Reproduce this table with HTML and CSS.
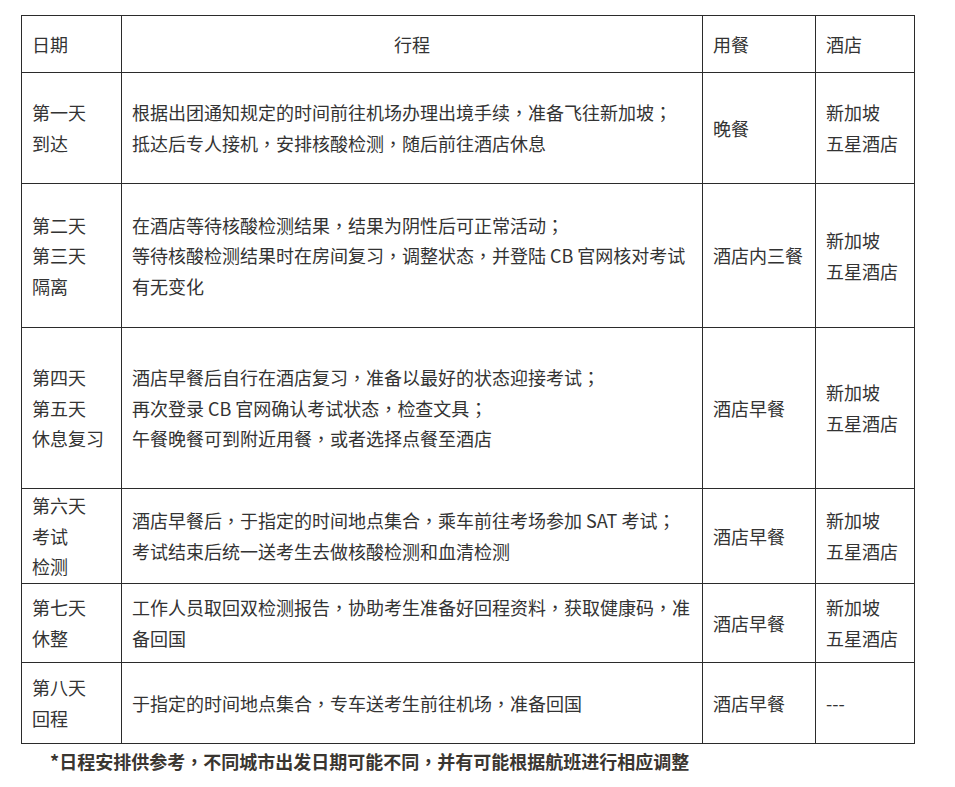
FILE: index.html
```html
<!DOCTYPE html>
<html lang="zh-CN">
<head>
<meta charset="utf-8">
<title>行程安排</title>
<link rel="stylesheet" href="styles.css">
</head>
<body>
<div class="page">
  <table class="schedule">
    <colgroup>
      <col class="c-date">
      <col class="c-plan">
      <col class="c-meal">
      <col class="c-hotel">
    </colgroup>
    <tr class="r-head">
      <td>日期</td>
      <td class="center">行程</td>
      <td>用餐</td>
      <td>酒店</td>
    </tr>
    <tr class="r1">
      <td>第一天<br>到达</td>
      <td>根据出团通知规定的时间前往机场办理出境手续<span class="pc" lang="zh-TW">，</span>准备飞往新加坡<span class="pc" lang="zh-TW">；</span><br>抵达后专人接机<span class="pc" lang="zh-TW">，</span>安排核酸检测<span class="pc" lang="zh-TW">，</span>随后前往酒店休息</td>
      <td>晚餐</td>
      <td>新加坡<br>五星酒店</td>
    </tr>
    <tr class="r2">
      <td>第二天<br>第三天<br>隔离</td>
      <td>在酒店等待核酸检测结果<span class="pc" lang="zh-TW">，</span>结果为阴性后可正常活动<span class="pc" lang="zh-TW">；</span><br>等待核酸检测结果时在房间复习<span class="pc" lang="zh-TW">，</span>调整状态<span class="pc" lang="zh-TW">，</span>并登陆 CB 官网核对考试有无变化</td>
      <td>酒店内三餐</td>
      <td>新加坡<br>五星酒店</td>
    </tr>
    <tr class="r3">
      <td>第四天<br>第五天<br>休息复习</td>
      <td>酒店早餐后自行在酒店复习<span class="pc" lang="zh-TW">，</span>准备以最好的状态迎接考试<span class="pc" lang="zh-TW">；</span><br>再次登录 CB 官网确认考试状态<span class="pc" lang="zh-TW">，</span>检查文具<span class="pc" lang="zh-TW">；</span><br>午餐晚餐可到附近用餐<span class="pc" lang="zh-TW">，</span>或者选择点餐至酒店</td>
      <td>酒店早餐</td>
      <td>新加坡<br>五星酒店</td>
    </tr>
    <tr class="r4">
      <td>第六天<br>考试<br>检测</td>
      <td>酒店早餐后<span class="pc" lang="zh-TW">，</span>于指定的时间地点集合<span class="pc" lang="zh-TW">，</span>乘车前往考场参加 SAT 考试<span class="pc" lang="zh-TW">；</span><br>考试结束后统一送考生去做核酸检测和血清检测</td>
      <td>酒店早餐</td>
      <td>新加坡<br>五星酒店</td>
    </tr>
    <tr class="r5">
      <td>第七天<br>休整</td>
      <td>工作人员取回双检测报告<span class="pc" lang="zh-TW">，</span>协助考生准备好回程资料<span class="pc" lang="zh-TW">，</span>获取健康码<span class="pc" lang="zh-TW">，</span>准备回国</td>
      <td>酒店早餐</td>
      <td>新加坡<br>五星酒店</td>
    </tr>
    <tr class="r6">
      <td>第八天<br>回程</td>
      <td>于指定的时间地点集合<span class="pc" lang="zh-TW">，</span>专车送考生前往机场<span class="pc" lang="zh-TW">，</span>准备回国</td>
      <td>酒店早餐</td>
      <td>---</td>
    </tr>
  </table>
  <p class="note">*日程安排供参考<span class="pc" lang="zh-TW">，</span>不同城市出发日期可能不同<span class="pc" lang="zh-TW">，</span>并有可能根据航班进行相应调整</p>
</div>
</body>
</html>
```

FILE: styles.css
```css
html, body {
  margin: 0;
  padding: 0;
  background: #ffffff;
}

body {
  font-family: "Noto Sans CJK SC", "Noto Sans", "Liberation Sans", sans-serif;
  color: #333333;
  font-size: 18px;
  line-height: 30.6px;
}

.page {
  padding: 15px 0 0 21px;
}

.schedule {
  border-collapse: collapse;
  table-layout: fixed;
  width: 893px;
}

.c-date { width: 100px; }
.c-plan { width: 581px; }
.c-meal { width: 113px; }
.c-hotel { width: 99px; }

.schedule td {
  border: 1px solid #2b2b2b;
  padding: 0 10px;
  vertical-align: middle;
  text-align: left;
}

.schedule td.center {
  text-align: center;
}

/* full-width punctuation drawn centred in its cell, as in the original */
.pc {
  font-family: "Noto Sans CJK TC", "Noto Sans CJK SC", sans-serif;
}

.r-head { height: 57px; }
.r1 { height: 111px; }
.r2 { height: 144px; }
.r3 { height: 161px; }
.r4 { height: 95px; }
.r5 { height: 79px; }
.r6 { height: 81px; }

.note {
  margin: 2px 0 0 29px;
  font-weight: bold;
  color: #3a3631;
}
```
